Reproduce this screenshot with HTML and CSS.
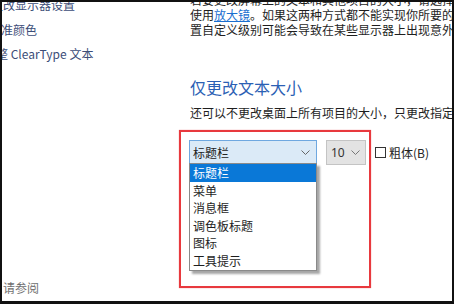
FILE: index.html
```html
<!DOCTYPE html>
<html>
    <head>
        <meta charset="utf-8">
        <title>显示</title>
        <link rel="stylesheet" href="styles.css">
    </head>
    <body>
        <div class="screen">
            <div class="side">
                <div class="side-links">
                    <a class="side-link l1">更改显示器设置</a>
                    <a class="side-link l2">校准颜色</a>
                    <a class="side-link l3">调整 ClearType 文本</a>
                </div>
                <div class="see-also">另请参阅</div>
            </div>
            <div class="main">
                <div class="intro">
                    <div>若要更改屏幕上的文本和其他项目的大小，请选择以下选项之一。若要临时放大部分屏幕，请<a>设置自定义</a></div>
                    <div>使用<a>放大镜</a>。如果这两种方式都不能实现你所要的更改，你可以设置自定义缩放级别(不建议)。设</div>
                    <div>置自定义级别可能会导致在某些显示器上出现意外行为。</div>
                </div>
                <h2 class="title">仅更改文本大小</h2>
                <div class="desc">还可以不更改桌面上所有项目的大小，只更改指定项目的文本大小。</div>
                <div class="highlight">
                    <div class="row">
                        <div class="combo combo-item">
                            <span>标题栏</span>
                            <svg width="9" height="5" viewBox="0 0 9 5"><polyline points="0.5,0.5 4.5,4.5 8.5,0.5" fill="none" stroke="#666" stroke-width="1"/></svg>
                            <ul class="dropdown">
                                <li class="selected">标题栏</li>
                                <li>菜单</li>
                                <li>消息框</li>
                                <li>调色板标题</li>
                                <li>图标</li>
                                <li>工具提示</li>
                            </ul>
                        </div>
                        <div class="combo combo-size">
                            <span>10</span>
                            <svg width="9" height="5" viewBox="0 0 9 5"><polyline points="0.5,0.5 4.5,4.5 8.5,0.5" fill="none" stroke="#777" stroke-width="1"/></svg>
                        </div>
                        <label class="bold-check">
                            <span class="box"></span>
                            <span>粗体(B)</span>
                        </label>
                    </div>
                </div>
            </div>
        </div>
    </body>
</html>
```

FILE: styles.css
```css
*{
    padding: 0;
    margin: 0;
    box-sizing: border-box;
}
html, body {width: 454px; height: 304px; overflow: hidden; background: #000;}
body {font-family: "Noto Sans CJK SC", "Microsoft YaHei", sans-serif; font-size: 12px;}

.screen{
    width: 454px;
    height: 304px;
    border: solid #111;
    border-width: 2px 2px 3px 2px;
    background-color: #fff;
    display: flex;
    overflow: hidden;
}

/* left column */
.side{
    width: 188px;
    flex: none;
    display: flex;
    flex-direction: column;
    justify-content: space-between;
    padding-bottom: 6px;
    overflow: hidden;
    white-space: nowrap;
}
.side-links{
    display: flex;
    flex-direction: column;
    gap: 9.5px;
    margin-top: -5px;
}
.side-link{
    line-height: 15px;
    color: #3c4d78;
}
.l1{margin-left: -11px;}
.l2{margin-left: -13px;}
.l3{margin-left: -18px;}
.see-also{
    line-height: 15px;
    color: #707070;
    margin-left: -11px;
}

/* main column */
.main{
    flex: 1;
    min-width: 0;
    white-space: nowrap;
    color: #1e1e1e;
}
.intro{
    margin-top: -10px;
    line-height: 15px;
    overflow: hidden;
}
.intro a{
    color: #1a6fd0;
    text-decoration: underline;
}
.title{
    margin-top: 39px;
    font-size: 16px;
    font-weight: normal;
    line-height: 22px;
    color: #2b60b4;
}
.desc{
    margin-top: 7px;
    line-height: 16px;
    overflow: hidden;
}

.highlight{
    margin-top: 9px;
    margin-left: -11px;
    width: 192px;
    height: 158px;
    border: 2px solid #e8393e;
    box-shadow: 0 0 1px rgba(232, 57, 62, 0.6);
    padding: 8px 0 0 8px;
}
.row{
    display: flex;
    align-items: flex-start;
    gap: 9px;
}
.combo{
    position: relative;
    flex: none;
    display: flex;
    align-items: center;
    justify-content: space-between;
    height: 24px;
    border: 1px solid;
}
.combo-item{
    width: 128px;
    padding: 0 6px 0 3px;
    background-color: #dbeaf7;
    border-color: #6fa8e0;
    color: #222;
}
.combo-size{
    width: 40px;
    height: 25px;
    padding: 0 5px 0 4px;
    background-color: #e3e3e3;
    border-color: #c4c4c4;
    font-family: "Noto Sans", sans-serif;
    color: #333;
}
.bold-check{
    display: flex;
    align-items: center;
    gap: 3px;
    margin-top: 5px;
    line-height: 15px;
    color: #222;
}
.box{
    width: 11px;
    height: 11px;
    border: 1px solid #333;
    background-color: #fff;
}

.dropdown{
    position: absolute;
    top: 100%;
    left: -1px;
    width: 128px;
    list-style: none;
    background-color: #fff;
    border: 1px solid #8a8a8a;
    box-shadow: 3px 3px 2px rgba(0, 0, 0, 0.35);
}
.dropdown li{
    height: 17.6px;
    line-height: 17.6px;
    padding-left: 3px;
    color: #1e1e1e;
}
.dropdown .selected{
    background-color: #0a78d7;
    color: #fff;
}
```
